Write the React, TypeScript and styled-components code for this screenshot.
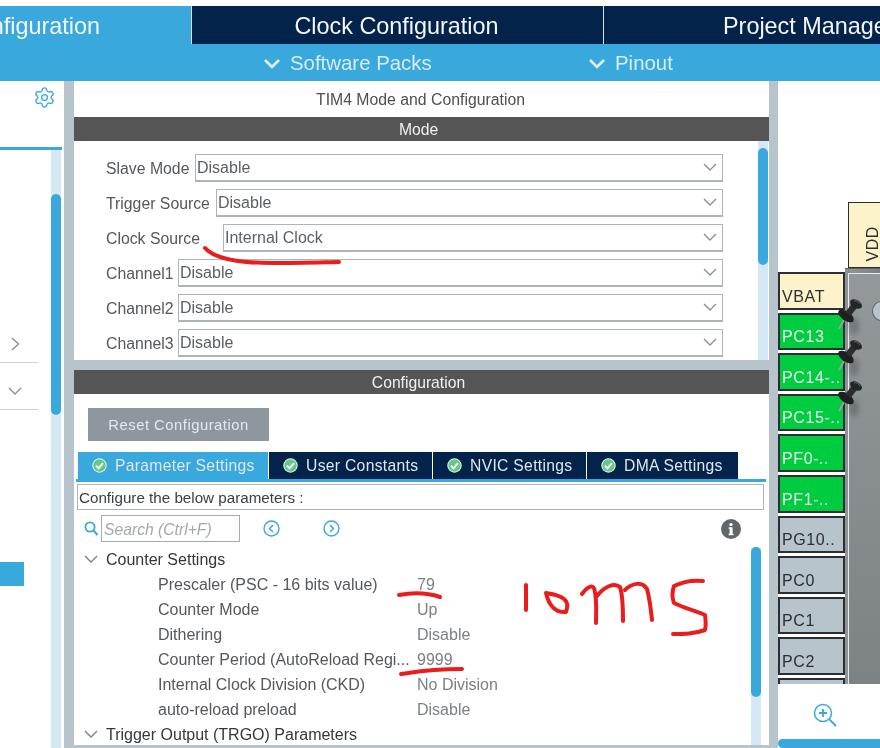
import React from 'react';
import styled, { createGlobalStyle } from 'styled-components';
import { Settings } from 'lucide-react';

const BLUE = '#39a8dc';
const NAVY = '#03234b';
const GUTTER = '#b8c4cc';
const TRACK = '#d7e8f5';

const GlobalStyle = createGlobalStyle`
  html, body {
    margin: 0;
    padding: 0;
    background: #fff;
  }
  body {
    font-family: "Liberation Sans", Arial, sans-serif;
  }
`;

const Page = styled.div`
  position: relative;
  display: flex;
  flex-direction: column;
  width: 880px;
  height: 748px;
  padding-top: 6px;
  box-sizing: border-box;
  overflow: hidden;
  background: #fff;
  filter: blur(0.35px);
`;

const TopTabs = styled.div`
  display: grid;
  grid-template-columns: 191px 411px 1fr;
  column-gap: 1px;
  height: 38px;
  flex: none;
  background: #d8e2e8;
`;

const TopTab = styled.div<{ $active?: boolean; $justify: string; $pad: string }>`
  display: flex;
  align-items: center;
  justify-content: ${(p) => p.$justify};
  padding: ${(p) => p.$pad};
  overflow: hidden;
  white-space: nowrap;
  font-size: 23.4px;
  color: #f4f7f9;
  background: ${(p) => (p.$active ? BLUE : NAVY)};
`;

const SubBar = styled.div`
  display: flex;
  align-items: center;
  height: 37px;
  flex: none;
  padding: 2px 0 0 264px;
  box-sizing: border-box;
  background: ${BLUE};
`;

const SubItem = styled.div<{ $width: string }>`
  display: flex;
  align-items: center;
  gap: 10px;
  width: ${(p) => p.$width};
  font-size: 20.4px;
  color: #d6ecf8;
`;

const Workspace = styled.div`
  display: flex;
  flex: 1;
  min-height: 0;
  background: ${GUTTER};
`;

const LeftPanel = styled.div`
  display: flex;
  flex-direction: column;
  width: 64px;
  flex: none;
  margin-right: 10px;
  background: #fff;
`;

const GearRow = styled.div`
  display: flex;
  justify-content: flex-end;
  height: 69px;
  padding: 5px 6px 0 0;
  box-sizing: border-box;
  flex: none;
  border-bottom: 3px solid ${BLUE};
  margin-right: 2px;
`;

const LeftBody = styled.div`
  display: flex;
  flex: 1;
  min-height: 0;
`;

const LeftList = styled.div`
  flex: 1;
  padding-top: 166px;
`;

const LeftRow = styled.div`
  display: flex;
  align-items: center;
  justify-content: center;
  height: 47px;
  width: 38px;
  padding: 10px 8px 0 0;
  box-sizing: border-box;
  border-bottom: 1px solid #c9d2d8;
`;

const LeftSelected = styled.div`
  width: 24px;
  height: 24px;
  margin-top: 152px;
  background: ${BLUE};
`;

const Track = styled.div<{ $top: number; $thumb: number; $after: number }>`
  position: relative;
  width: 10px;
  margin-right: ${(p) => p.$after}px;
  flex: none;
  background: ${TRACK};
  &::after {
    content: '';
    position: absolute;
    left: 0;
    right: 0;
    top: ${(p) => p.$top}px;
    height: ${(p) => p.$thumb}px;
    border-radius: 5px;
    background: ${BLUE};
  }
`;

const CenterColumn = styled.div`
  display: flex;
  flex-direction: column;
  width: 695px;
  flex: none;
  gap: 10px;
  padding-bottom: 3px;
  box-sizing: border-box;
`;

const ModePanel = styled.section`
  display: flex;
  flex-direction: column;
  height: 279px;
  flex: none;
  background: #fff;
`;

const PanelTitle = styled.div`
  display: flex;
  align-items: center;
  justify-content: center;
  height: 36px;
  flex: none;
  padding: 2px 2px 0 0;
  box-sizing: border-box;
  font-size: 15.8px;
  color: #4d4f52;
`;

const SectionHeader = styled.div`
  display: flex;
  align-items: center;
  justify-content: center;
  height: 24px;
  flex: none;
  padding: 2px 6px 0 0;
  box-sizing: border-box;
  font-size: 15.7px;
  color: #f0f1f1;
  background: #545554;
`;

const ModeBody = styled.div`
  display: flex;
  flex: 1;
  min-height: 0;
`;

const ModeRows = styled.div`
  display: flex;
  flex-direction: column;
  flex: 1;
  gap: 7px;
  padding: 13px 35px 0 32px;
  overflow: hidden;
`;

const ModeRow = styled.div`
  display: flex;
  align-items: center;
  height: 28px;
  flex: none;
`;

const ModeLabel = styled.span<{ $width: number }>`
  width: ${(p) => p.$width}px;
  flex: none;
  padding-top: 1px;
  font-size: 15.8px;
  color: #54585c;
`;

const SelectBox = styled.div`
  display: flex;
  align-items: center;
  justify-content: space-between;
  flex: 1;
  height: 28px;
  padding: 0 5px 0 1px;
  box-sizing: border-box;
  border: 1px solid #adb4b9;
  border-bottom-width: 2px;
  font-size: 16px;
  color: #5b5f63;
  background: #fff;
`;

const SelectText = styled.span`
  padding-top: 1px;
`;

const ConfigPanel = styled.section`
  display: flex;
  flex-direction: column;
  flex: 1;
  min-height: 0;
  background: #fff;
`;

const ResetButton = styled.button`
  display: block;
  width: 181px;
  height: 33px;
  margin: 14px 0 11px 14px;
  padding: 0;
  flex: none;
  border: 0;
  font-family: inherit;
  font-size: 14.8px;
  letter-spacing: 0.5px;
  color: #e6e9eb;
  background: #8e979d;
`;

const ParamTabs = styled.div`
  display: flex;
  gap: 1px;
  height: 30px;
  margin: 0 3px 0 2px;
  padding-left: 2px;
  flex: none;
  box-sizing: border-box;
  border-bottom: 3px solid ${BLUE};
`;

const ParamTab = styled.div<{ $active?: boolean; $width: number }>`
  display: flex;
  align-items: center;
  gap: 8px;
  width: ${(p) => p.$width}px;
  padding-left: 14px;
  box-sizing: border-box;
  font-size: 15.7px;
  letter-spacing: 0.3px;
  white-space: nowrap;
  color: #dfe6ec;
  background: ${(p) => (p.$active ? BLUE : NAVY)};
`;

const HintBox = styled.div`
  display: flex;
  align-items: center;
  height: 26px;
  margin: 2px 5px 0 3px;
  padding-left: 1px;
  flex: none;
  box-sizing: border-box;
  border: 1px solid #adb4b9;
  font-size: 15.2px;
  color: #3c3f42;
`;

const Toolbar = styled.div`
  display: flex;
  align-items: center;
  height: 27px;
  margin: 5px 28px 0 10px;
  flex: none;
`;

const SearchBox = styled.div`
  display: flex;
  align-items: center;
  width: 139px;
  height: 27px;
  margin: 0 23px 0 3px;
  padding: 2px 0 0 2px;
  box-sizing: border-box;
  border: 1px solid #a3abb0;
  font-size: 15.7px;
  font-style: italic;
  color: #a4a8ab;
`;

const RoundButton = styled.span`
  display: flex;
  margin-right: 43px;
`;

const InfoButton = styled.span`
  display: flex;
  margin-left: auto;
`;

const TreeArea = styled.div`
  display: flex;
  flex: 1;
  min-height: 0;
  padding-top: 5px;
`;

const TreeList = styled.div`
  flex: 1;
  padding-left: 10px;
  overflow: hidden;
`;

const TreeGroup = styled.div`
  display: flex;
  align-items: center;
  gap: 8px;
  height: 25px;
  font-size: 16px;
  color: #33383c;
`;

const TreeRow = styled.div`
  display: grid;
  grid-template-columns: 259px 1fr;
  align-items: center;
  height: 25px;
  padding-left: 74px;
  font-size: 16px;
`;

const ParamName = styled.span`
  overflow: hidden;
  white-space: nowrap;
  color: #54585c;
`;

const ParamValue = styled.span`
  color: #7c8084;
`;

const ChipColumn = styled.div`
  display: flex;
  flex-direction: column;
  flex: 1;
  min-width: 0;
  margin-left: 9px;
`;

const ChipCanvas = styled.div`
  display: grid;
  grid-template-columns: 67px 35px;
  flex: 1;
  min-height: 0;
  overflow: hidden;
  background: #fff;
`;

const PinColumn = styled.div`
  display: flex;
  flex-direction: column;
  gap: 3px;
  padding-top: 191px;
`;

const PinBox = styled.div<{ $bg: string; $color: string }>`
  display: flex;
  align-items: flex-end;
  height: 37.6px;
  flex: none;
  padding: 0 0 2px 2px;
  box-sizing: border-box;
  border: 2px solid #2b2f31;
  font-size: 16px;
  letter-spacing: 0.6px;
  white-space: nowrap;
  color: ${(p) => p.$color};
  background: ${(p) => p.$bg};
`;

const ChipSide = styled.div`
  display: flex;
  flex-direction: column;
  min-width: 0;
  padding-top: 121px;
`;

const VddPin = styled.div`
  display: flex;
  height: 66px;
  margin-left: 3px;
  padding-left: 15px;
  flex: none;
  box-sizing: border-box;
  border: 1px solid #2b2f31;
  border-right: 0;
  background: #fdf3cb;
`;

const VddText = styled.span`
  writing-mode: vertical-rl;
  transform: rotate(180deg);
  align-self: flex-end;
  padding-top: 5px;
  font-size: 16px;
  letter-spacing: 0.6px;
  color: #2b2f31;
`;

const ChipBody = styled.div`
  flex: 1;
  padding: 4px 0 0 3px;
  border-top: 1px solid #5d6265;
  background: linear-gradient(90deg, #6f7477, #8f9497 15%, #7b8083);
  box-shadow: inset 3px 0 0 #8d9396;
`;

const ChipFace = styled.div`
  height: 100%;
  padding: 27px 0 0 23px;
  box-sizing: border-box;
  border-left: 1px solid #e8ecee;
  border-top: 1px solid #e8ecee;
  background: linear-gradient(180deg, #93989b, #7b8083);
`;

const ChipDot = styled.div`
  width: 16px;
  height: 18px;
  border: 1px solid #59636a;
  border-radius: 50%;
  background: ${GUTTER};
`;

const ZoomBar = styled.div`
  display: flex;
  flex-direction: column;
  height: 64px;
  flex: none;
  background: #fff;
`;

const ZoomRow = styled.div`
  display: flex;
  flex: 1;
  padding: 18px 0 0 34px;
  box-sizing: border-box;
`;

const ZoomSlider = styled.div`
  height: 9px;
  flex: none;
  border-radius: 5px 0 0 5px;
  background: ${BLUE};
`;

const Pushpin = styled.svg<{ $top: number }>`
  position: absolute;
  left: 834px;
  top: ${(p) => p.$top}px;
  width: 36px;
  height: 44px;
  overflow: visible;
`;

const PinShadow = styled.ellipse`
  fill: #2f3436;
  opacity: 0.3;
  filter: blur(2.5px);
`;

const PenLayer = styled.svg`
  position: absolute;
  left: 0;
  top: 0;
  width: 880px;
  height: 748px;
  pointer-events: none;
`;

const Chevron = ({ w, color, stroke }: { w: number; color: string; stroke: number }) => {
  const h = w / 2;
  return (
    <svg width={w} height={h + 2} viewBox={`0 0 ${w} ${h + 2}`}>
      <path d={`M1 1 ${w / 2} ${h} ${w - 1} 1`} fill="none" stroke={color} strokeWidth={stroke} />
    </svg>
  );
};

const TabCheck = () => (
  <svg width="15" height="15" viewBox="0 0 15 15">
    <circle cx="7.5" cy="7.5" r="7.2" fill="#eef7f0" />
    <circle cx="7.5" cy="7.5" r="6.2" fill="#62c987" />
    <path d="M4 7.6 6.6 10.2 11 5.2" fill="none" stroke="#fff" strokeWidth="2" />
  </svg>
);

const NavCircle = ({ d }: { d: string }) => (
  <svg width="17" height="17" viewBox="0 0 17 17">
    <circle cx="8.5" cy="8.5" r="7.5" fill="none" stroke={BLUE} strokeWidth="1.4" />
    <path d={d} fill="none" stroke={BLUE} strokeWidth="1.5" />
  </svg>
);

const modeRows = [
  { label: 'Slave Mode', width: 89, value: 'Disable' },
  { label: 'Trigger Source', width: 110, value: 'Disable' },
  { label: 'Clock Source', width: 117, value: 'Internal Clock' },
  { label: 'Channel1', width: 72, value: 'Disable' },
  { label: 'Channel2', width: 72, value: 'Disable' },
  { label: 'Channel3', width: 72, value: 'Disable' },
];

const paramTabs = [
  { label: 'Parameter Settings', width: 190, active: true },
  { label: 'User Constants', width: 163 },
  { label: 'NVIC Settings', width: 153 },
  { label: 'DMA Settings', width: 151 },
];

const counterParams = [
  { name: 'Prescaler (PSC - 16 bits value)', value: '79' },
  { name: 'Counter Mode', value: 'Up' },
  { name: 'Dithering', value: 'Disable' },
  { name: 'Counter Period (AutoReload Regi...', value: '9999' },
  { name: 'Internal Clock Division (CKD)', value: 'No Division' },
  { name: 'auto-reload preload', value: 'Disable' },
];

const pins = [
  { name: 'VBAT', bg: '#fdf3cb', color: '#2b2f31' },
  { name: 'PC13', bg: '#00cc3f', color: '#e8fbee' },
  { name: 'PC14-..', bg: '#00cc3f', color: '#e8fbee' },
  { name: 'PC15-..', bg: '#00cc3f', color: '#e8fbee' },
  { name: 'PF0-..', bg: '#00cc3f', color: '#e8fbee' },
  { name: 'PF1-..', bg: '#00cc3f', color: '#e8fbee' },
  { name: 'PG10..', bg: GUTTER, color: '#2b2f31' },
  { name: 'PC0', bg: GUTTER, color: '#2b2f31' },
  { name: 'PC1', bg: GUTTER, color: '#2b2f31' },
  { name: 'PC2', bg: GUTTER, color: '#2b2f31' },
  { name: '', bg: GUTTER, color: '#2b2f31' },
];

const penStrokes = [
  'M205 248 C212 256 224 259 238 261 C258 264 290 263 339 262',
  'M399 595 C410 593 425 592 440 597',
  'M401 674 C415 672 430 669 462 669',
  'M526 585 L526 610',
  'M546 593 C549 606 556 613 566 612 C570 602 566 596 546 593',
  'M582 594 C588 586 594 583 595 592 C597 604 596 614 596 623',
  'M597 596 C604 587 614 582 620 587 C623 596 623 610 623 621',
  'M625 590 C632 583 642 581 647 589 C650 600 651 610 652 620',
  'M703 581 C694 580 684 581 674 586 C672 592 672 598 674 603 C684 608 696 611 705 615 C706 622 706 626 705 630 C694 634 684 634 673 634',
];

const App: React.FC = () => (
  <Page>
    <GlobalStyle />
    <TopTabs>
      <TopTab $active $justify="flex-end" $pad="2px 91px 0 0">Pinout Configuration</TopTab>
      <TopTab $justify="center" $pad="2px 2px 0 0">Clock Configuration</TopTab>
      <TopTab $justify="flex-start" $pad="2px 0 0 119px">Project Manager</TopTab>
    </TopTabs>
    <SubBar>
      <SubItem $width="325px"><Chevron w={16} color="#e3f2fa" stroke={2.6} />Software Packs</SubItem>
      <SubItem $width="120px"><Chevron w={16} color="#e3f2fa" stroke={2.6} />Pinout</SubItem>
    </SubBar>
    <Workspace>
      <LeftPanel>
        <GearRow><Settings size={23} color={BLUE} strokeWidth={1.4} /></GearRow>
        <LeftBody>
          <LeftList>
            <LeftRow>
              <svg width="9" height="14" viewBox="0 0 9 14">
                <path d="M1 1 7.5 7 1 13" fill="none" stroke="#8b8f92" strokeWidth="1.4" />
              </svg>
            </LeftRow>
            <LeftRow><Chevron w={14} color="#8b8f92" stroke={1.4} /></LeftRow>
            <LeftSelected />
          </LeftList>
          <Track $top={44} $thumb={221} $after={3} />
        </LeftBody>
      </LeftPanel>
      <CenterColumn>
        <ModePanel>
          <PanelTitle>TIM4 Mode and Configuration</PanelTitle>
          <SectionHeader>Mode</SectionHeader>
          <ModeBody>
            <ModeRows>
              {modeRows.map((row) => (
                <ModeRow key={row.label}>
                  <ModeLabel $width={row.width}>{row.label}</ModeLabel>
                  <SelectBox>
                    <SelectText>{row.value}</SelectText>
                    <Chevron w={14} color="#8b8f92" stroke={1.4} />
                  </SelectBox>
                </ModeRow>
              ))}
            </ModeRows>
            <Track $top={7} $thumb={117} $after={1} />
          </ModeBody>
        </ModePanel>
        <ConfigPanel>
          <SectionHeader>Configuration</SectionHeader>
          <ResetButton>Reset Configuration</ResetButton>
          <ParamTabs>
            {paramTabs.map((tab) => (
              <ParamTab key={tab.label} $active={tab.active} $width={tab.width}>
                <TabCheck />
                {tab.label}
              </ParamTab>
            ))}
          </ParamTabs>
          <HintBox>Configure the below parameters :</HintBox>
          <Toolbar>
            <svg width="14" height="15" viewBox="0 0 14 15">
              <circle cx="6" cy="6" r="4.6" fill="none" stroke={BLUE} strokeWidth="1.8" />
              <path d="M9.5 9.5 13.5 14" stroke={BLUE} strokeWidth="2" />
            </svg>
            <SearchBox>Search (Ctrl+F)</SearchBox>
            <RoundButton><NavCircle d="M10 5 6.5 8.5 10 12" /></RoundButton>
            <RoundButton><NavCircle d="M7 5 10.5 8.5 7 12" /></RoundButton>
            <InfoButton>
              <svg width="20" height="20" viewBox="0 0 20 20">
                <circle cx="10" cy="10" r="10" fill="#636668" />
                <rect x="8.6" y="8.4" width="3" height="7.6" fill="#fff" />
                <rect x="7.6" y="8.4" width="3" height="1.4" fill="#fff" />
                <rect x="7.6" y="14.8" width="5" height="1.4" fill="#fff" />
                <circle cx="10" cy="5.6" r="1.7" fill="#fff" />
              </svg>
            </InfoButton>
          </Toolbar>
          <TreeArea>
            <TreeList>
              <TreeGroup><Chevron w={14} color="#7c8084" stroke={1.4} />Counter Settings</TreeGroup>
              {counterParams.map((param) => (
                <TreeRow key={param.name}>
                  <ParamName>{param.name}</ParamName>
                  <ParamValue>{param.value}</ParamValue>
                </TreeRow>
              ))}
              <TreeGroup><Chevron w={14} color="#7c8084" stroke={1.4} />Trigger Output (TRGO) Parameters</TreeGroup>
            </TreeList>
            <Track $top={0} $thumb={150} $after={8} />
          </TreeArea>
        </ConfigPanel>
      </CenterColumn>
      <ChipColumn>
        <ChipCanvas>
          <PinColumn>
            {pins.map((pin, index) => (
              <PinBox key={index} $bg={pin.bg} $color={pin.color}>{pin.name}</PinBox>
            ))}
          </PinColumn>
          <ChipSide>
            <VddPin><VddText>VDD</VddText></VddPin>
            <ChipBody>
              <ChipFace><ChipDot /></ChipFace>
            </ChipBody>
          </ChipSide>
        </ChipCanvas>
        <ZoomBar>
          <ZoomRow>
            <svg width="26" height="26" viewBox="0 0 26 26">
              <circle cx="11" cy="11" r="8.5" fill="none" stroke={BLUE} strokeWidth="1.5" />
              <path d="M7 11H15M11 7V15" stroke={BLUE} strokeWidth="1.8" />
              <path d="M17.5 17.5 24 24" stroke={BLUE} strokeWidth="1.8" />
            </svg>
          </ZoomRow>
          <ZoomSlider />
        </ZoomBar>
      </ChipColumn>
    </Workspace>
    {[296, 337, 378].map((top) => (
      <Pushpin key={top} $top={top} viewBox="0 0 36 44">
        <PinShadow cx="20" cy="30" rx="5" ry="9" />
        <path d="M10 24 5 33" stroke="#9aa09f" strokeWidth="2" />
        <ellipse cx="12" cy="20" rx="9" ry="4.5" transform="rotate(35 12 20)" fill="#1e2022" />
        <path d="M14 18 21 9" stroke="#2a2c2e" strokeWidth="6.5" />
        <ellipse cx="22" cy="8" rx="6.5" ry="4" transform="rotate(30 22 8)" fill="#232527" />
        <path d="M20 5 C22 4 25 6 26 8" stroke="#6b7073" strokeWidth="1" fill="none" />
      </Pushpin>
    ))}
    <PenLayer viewBox="0 0 880 748">
      {penStrokes.map((d) => (
        <path key={d} d={d} fill="none" stroke="#ea1c1c" strokeWidth="4" strokeLinecap="round" strokeLinejoin="round" />
      ))}
    </PenLayer>
  </Page>
);

export default App;
